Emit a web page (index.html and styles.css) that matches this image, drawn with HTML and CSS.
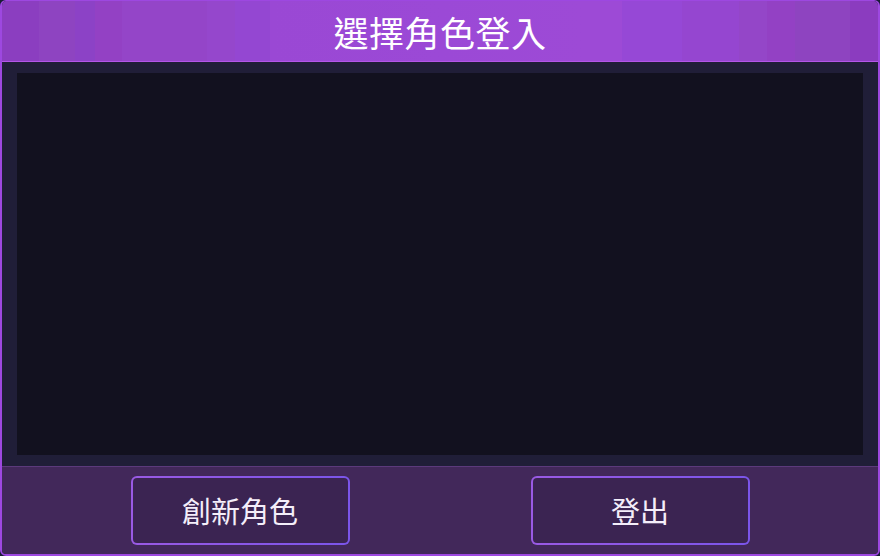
FILE: index.html
```html
<!DOCTYPE html>
<html lang="zh-Hant">
<head>
<meta charset="utf-8">
<title>選擇角色登入</title>
<link rel="stylesheet" href="styles.css">
</head>
<body>
<div class="dialog">
  <header class="dialog-header">
    <h1 class="dialog-title">選擇角色登入</h1>
  </header>
  <main class="dialog-body">
    <div class="char-list"></div>
  </main>
  <footer class="dialog-footer">
    <button class="btn" type="button">創新角色</button>
    <button class="btn" type="button">登出</button>
  </footer>
</div>
</body>
</html>
```

FILE: styles.css
```css
html, body {
  margin: 0;
  padding: 0;
  background: #1a1c36;
}

body {
  width: 880px;
  height: 556px;
  font-family: "Noto Sans CJK TC", "Noto Sans", sans-serif;
}

.dialog {
  box-sizing: border-box;
  width: 880px;
  height: 556px;
  border: 2px solid #9d48e0;
  border-top-width: 1px;
  border-radius: 6px;
  overflow: hidden;
  display: flex;
  flex-direction: column;
  background: #201e38;
}

.dialog-header {
  height: 60px;
  border-bottom: 1px solid #b456e8;
  display: flex;
  align-items: center;
  justify-content: center;
  background: linear-gradient(90deg,
    #8b3ec0 0px, #8b3ec0 37px,
    #8e44c1 37px, #8e44c1 73px,
    #8c42c6 73px, #8c42c6 93px,
    #9341c4 93px, #9341c4 120px,
    #9445c8 120px, #9445c8 205px,
    #9547cc 205px, #9547cc 233px,
    #9447d2 233px, #9447d2 268px,
    #9a48d4 268px, #9b49d6 440px,
    #9d4ad6 580px, #9d4ad6 620px,
    #9648d6 620px, #9648d6 680px,
    #9546d0 680px, #9546d0 737px,
    #9446c8 737px, #9446c8 765px,
    #9341c4 765px, #9341c4 793px,
    #8e44c0 793px, #8e44c0 848px,
    #8b3cbf 848px, #8b3cbf 880px);
}

.dialog-title {
  margin: 0;
  font-size: 35px;
  font-weight: 400;
  color: #ffffff;
  line-height: 1;
  letter-spacing: 0.5px;
}

.dialog-body {
  flex: 1;
  padding: 11px 15px;
  display: flex;
  background: #201e38;
}

.char-list {
  flex: 1;
  background: #12111f;
}

.dialog-footer {
  height: 87px;
  border-top: 1px solid #5c3a7c;
  background: #42285a;
  display: flex;
  align-items: center;
  justify-content: center;
  gap: 181px;
}

.btn {
  box-sizing: border-box;
  width: 219px;
  height: 69px;
  border: 2px solid transparent;
  border-radius: 6px;
  background:
    linear-gradient(#3b2452, #3b2452) padding-box,
    linear-gradient(90deg, #9a5ae4, #7b55ea) border-box;
  color: #f4eefa;
  font-family: "Noto Sans CJK TC", "Noto Sans", sans-serif;
  font-size: 29px;
  font-weight: 400;
  line-height: 1;
  padding: 0;
  cursor: pointer;
}
```
